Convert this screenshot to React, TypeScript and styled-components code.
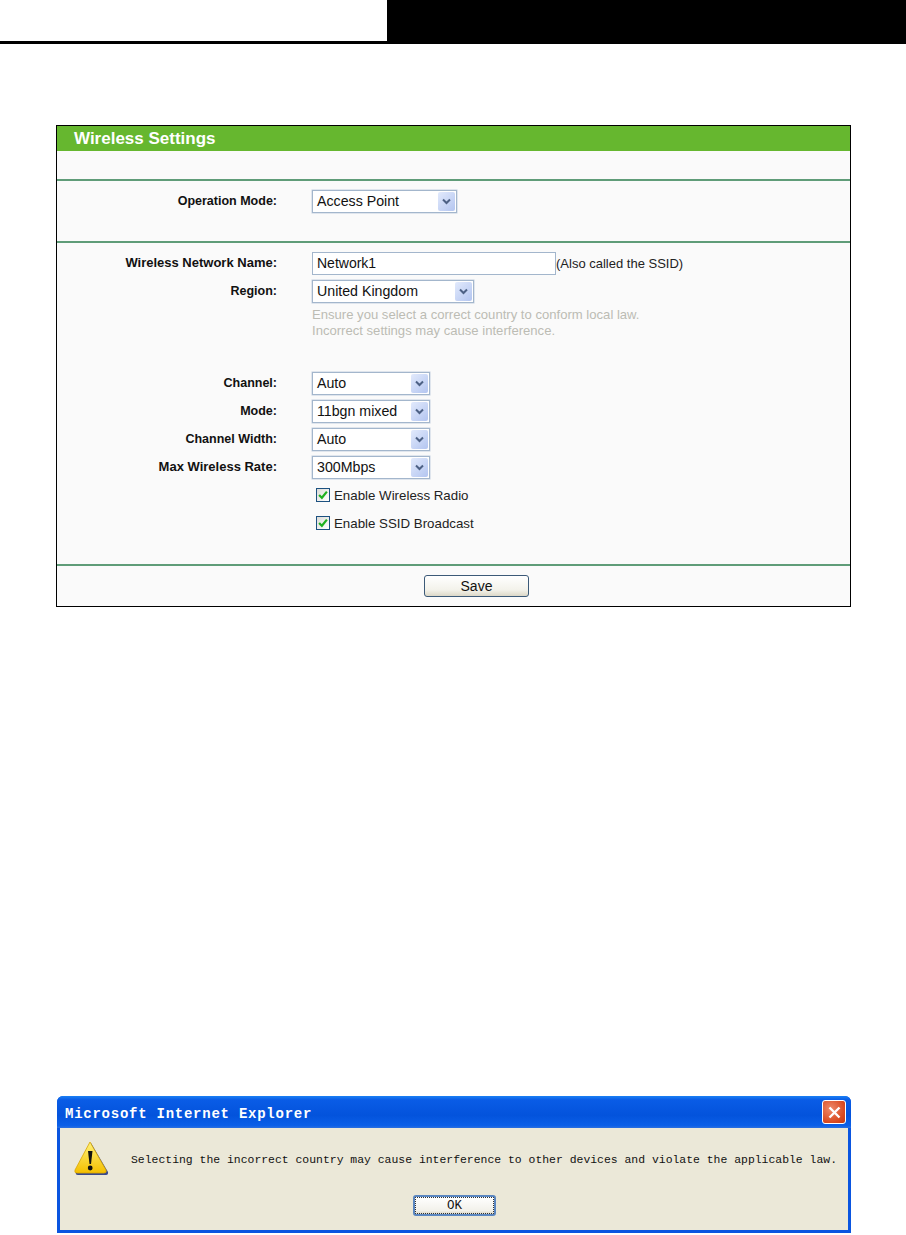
import { createGlobalStyle, styled } from 'styled-components';

const GlobalStyle = createGlobalStyle`
  html, body {
    margin: 0;
    background: #fff;
  }
  body {
    font-family: "Liberation Sans", Arial, sans-serif;
    color: #000;
  }
`;

const Page = styled.div`
  width: 906px;
  height: 1235px;
  overflow: hidden;
`;

const Header = styled.div`
  display: flex;
  height: 44px;
`;

const HeaderLeft = styled.div`
  width: 387px;
  height: 41px;
  border-bottom: 3px solid #000;
`;

const HeaderRight = styled.div`
  flex: 1;
  background: #000;
`;

const Panel = styled.section`
  width: 795px;
  height: 482px;
  box-sizing: border-box;
  margin: 81px 0 0 56px;
  border: 1px solid #000;
  background: #fafafa;
  display: flex;
  flex-direction: column;
`;

const PanelTitle = styled.h2`
  height: 25px;
  margin: 0;
  padding-left: 17px;
  background: #66b72f;
  color: #fff;
  font-size: 17px;
  line-height: 25px;
  font-weight: bold;
`;

const Section = styled.div<{ $height: number; $top?: number }>`
  height: ${(p) => p.$height}px;
  padding-top: ${(p) => p.$top ?? 0}px;
  box-sizing: border-box;
  display: flex;
  flex-direction: column;
`;

const Divider = styled.div`
  height: 2px;
  flex: none;
  background: #5f9c78;
`;

const Row = styled.div<{ $gap?: number }>`
  display: grid;
  grid-template-columns: 220px auto;
  column-gap: 35px;
  justify-content: start;
  align-items: center;
  height: 28px;
  margin-top: ${(p) => p.$gap ?? 0}px;
  flex: none;
`;

const Label = styled.div<{ $size?: number }>`
  text-align: right;
  font-size: ${(p) => p.$size ?? 13}px;
  line-height: 16px;
  font-weight: bold;
  color: #111;
`;

const FieldLine = styled.div`
  display: flex;
  align-items: center;
  font-size: 13px;
  color: #222;
`;

const Select = styled.div<{ $width: number }>`
  width: ${(p) => p.$width}px;
  height: 23px;
  box-sizing: border-box;
  border: 1px solid #a3b6cc;
  box-shadow: 0 0 0 0.5px #c3d0df;
  background: #fff;
  display: flex;
  align-items: center;
  justify-content: space-between;
  padding: 0 1px 0 4px;
  font-size: 14.2px;
  color: #111;
`;

const SelectArrow = styled.span`
  width: 17px;
  height: 19px;
  border-radius: 2px;
  background: linear-gradient(135deg, #e2eafc, #b3c5f0);
  display: flex;
  align-items: center;
  justify-content: center;
`;

const TextInput = styled.input`
  width: 244px;
  height: 23px;
  box-sizing: border-box;
  border: 1px solid #a3b6cc;
  background: #fff;
  padding: 0 4px;
  margin: 0;
  font: 14px "Liberation Sans", Arial, sans-serif;
  color: #111;
  outline: none;
`;

const Hint = styled.div`
  height: 40px;
  margin: 2px 0 0 255px;
  font-size: 13.1px;
  line-height: 16px;
  color: #bcbcb4;
  flex: none;
`;

const CheckLine = styled.div`
  display: flex;
  align-items: center;
  gap: 4px;
  margin-left: 259px;
  height: 28px;
  flex: none;
  font-size: 13.3px;
  color: #222;
`;

const CheckBox = styled.span`
  width: 14px;
  height: 14px;
  box-sizing: border-box;
  border: 1px solid #1c5180;
  background: linear-gradient(135deg, #dcdcd7, #fff);
  display: flex;
  align-items: center;
  justify-content: center;
`;

const Footer = styled.div`
  flex: 1;
  display: flex;
  align-items: center;
  padding-left: 367px;
`;

const SaveButton = styled.button`
  width: 105px;
  height: 22px;
  padding: 0;
  border: 1px solid #3c5a78;
  border-radius: 3px;
  background: linear-gradient(#ffffff, #f3f2ea 70%, #dcd8c8);
  font: 14px "Liberation Sans", Arial, sans-serif;
  color: #111;
`;

const Dialog = styled.section`
  width: 794px;
  height: 137px;
  box-sizing: border-box;
  margin: 489px 0 0 57px;
  border-radius: 6px 6px 0 0;
  background: #0a55e0;
  padding: 0 3px 3px;
  display: flex;
  flex-direction: column;
`;

const DialogTitleBar = styled.div`
  height: 32px;
  box-sizing: border-box;
  flex: none;
  margin: 0 -3px;
  padding: 3px 5px 0 8px;
  border-radius: 6px 6px 0 0;
  background: linear-gradient(#1a80f4 0, #0a5ce6 12%, #0353dc 60%, #0a5fe8 92%, #2a6fe0 100%);
  display: flex;
  align-items: center;
  justify-content: space-between;
  color: #fff;
  font-family: "Liberation Mono", monospace;
  font-size: 14px;
  font-weight: bold;
  letter-spacing: 0.75px;
`;

const CloseButton = styled.span`
  width: 24px;
  height: 24px;
  margin-top: -3px;
  box-sizing: border-box;
  border: 1px solid #fff;
  border-radius: 3px;
  background: radial-gradient(circle at 35% 35%, #ee8a6a, #d8481f 70%, #c23a14);
  display: flex;
  align-items: center;
  justify-content: center;
`;

const DialogBody = styled.div`
  flex: 1;
  background: #ebe8d8;
  display: flex;
  flex-direction: column;
`;

const MessageRow = styled.div`
  display: flex;
  align-items: flex-start;
  padding: 12px 0 0 13px;
  height: 67px;
  box-sizing: border-box;
  flex: none;
`;

const MessageText = styled.div`
  margin: 13px 0 0 22px;
  font-family: "Liberation Mono", monospace;
  font-size: 11.43px;
  line-height: 14px;
  color: #111;
  white-space: nowrap;
`;

const OkRow = styled.div`
  display: flex;
  justify-content: center;
  padding-left: 1px;
`;

const OkButton = styled.button`
  width: 83px;
  height: 21px;
  padding: 0;
  border: 2px solid #5a86c0;
  border-radius: 3px;
  outline: 1px dotted #333;
  outline-offset: -3px;
  background: linear-gradient(#fff, #f2f1ea 80%, #dcd8c8);
  font: 12.5px "Liberation Mono", monospace;
  color: #111;
`;

const Arrow = () => (
  <SelectArrow>
    <svg width="9" height="7" viewBox="0 0 9 7">
      <path d="M1 1.5 L4.5 5 L8 1.5" fill="none" stroke="#4d6185" strokeWidth="2" />
    </svg>
  </SelectArrow>
);

const Checked = ({ children }: { children: string }) => (
  <CheckLine>
    <CheckBox>
      <svg width="10" height="10" viewBox="0 0 9 9">
        <path d="M1 4.5 L3.5 7 L8 1.5" fill="none" stroke="#1fb01f" strokeWidth="2" />
      </svg>
    </CheckBox>
    {children}
  </CheckLine>
);

const WarningIcon = () => (
  <svg width="36" height="36" viewBox="0 0 36 36">
    <defs>
      <linearGradient id="warn" x1="0" y1="0" x2="0" y2="1">
        <stop offset="0" stopColor="#fff27a" />
        <stop offset="1" stopColor="#f4bf00" />
      </linearGradient>
    </defs>
    <path d="M18 3 L35 32 Q35.5 35 33 35 L5 35 Q2 35 3 32 Z" fill="#3a4a8c" />
    <path d="M17 2 L33 30 Q34 33 31 33 L4 33 Q1 33 2 30 Z" fill="url(#warn)" stroke="#d9a400" strokeWidth="0.8" />
    <path d="M15 11 L19.5 11 L18 24 L16.5 24 Z" fill="#111" />
    <circle cx="17.2" cy="28" r="2.4" fill="#111" />
  </svg>
);

export default function App() {
  return (
    <Page>
      <GlobalStyle />
      <Header>
        <HeaderLeft />
        <HeaderRight />
      </Header>

      <Panel>
        <PanelTitle>Wireless Settings</PanelTitle>
        <Section $height={28} />
        <Divider />
        <Section $height={60} $top={6}>
          <Row>
            <Label $size={12.5}>Operation Mode:</Label>
            <Select $width={145}>Access Point<Arrow /></Select>
          </Row>
        </Section>
        <Divider />
        <Section $height={321} $top={6}>
          <Row>
            <Label>Wireless Network Name:</Label>
            <FieldLine>
              <TextInput value="Network1" readOnly />
              (Also called the SSID)
            </FieldLine>
          </Row>
          <Row>
            <Label $size={12.5}>Region:</Label>
            <Select $width={162}>United Kingdom<Arrow /></Select>
          </Row>
          <Hint>
            Ensure you select a correct country to conform local law.
            <br />
            Incorrect settings may cause interference.
          </Hint>
          <Row $gap={22}>
            <Label $size={12.5}>Channel:</Label>
            <Select $width={118}>Auto<Arrow /></Select>
          </Row>
          <Row>
            <Label $size={12.5}>Mode:</Label>
            <Select $width={118}>11bgn mixed<Arrow /></Select>
          </Row>
          <Row>
            <Label $size={12.5}>Channel Width:</Label>
            <Select $width={118}>Auto<Arrow /></Select>
          </Row>
          <Row>
            <Label>Max Wireless Rate:</Label>
            <Select $width={118}>300Mbps<Arrow /></Select>
          </Row>
          <Checked>Enable Wireless Radio</Checked>
          <Checked>Enable SSID Broadcast</Checked>
        </Section>
        <Divider />
        <Footer>
          <SaveButton>Save</SaveButton>
        </Footer>
      </Panel>

      <Dialog>
        <DialogTitleBar>
          Microsoft Internet Explorer
          <CloseButton>
            <svg width="13" height="13" viewBox="0 0 13 13">
              <path d="M1.5 1.5 L11.5 11.5 M11.5 1.5 L1.5 11.5" stroke="#fff" strokeWidth="2.4" />
            </svg>
          </CloseButton>
        </DialogTitleBar>
        <DialogBody>
          <MessageRow>
            <WarningIcon />
            <MessageText>
              Selecting the incorrect country may cause interference to other devices and violate the applicable law.
            </MessageText>
          </MessageRow>
          <OkRow>
            <OkButton>OK</OkButton>
          </OkRow>
        </DialogBody>
      </Dialog>
    </Page>
  );
}
